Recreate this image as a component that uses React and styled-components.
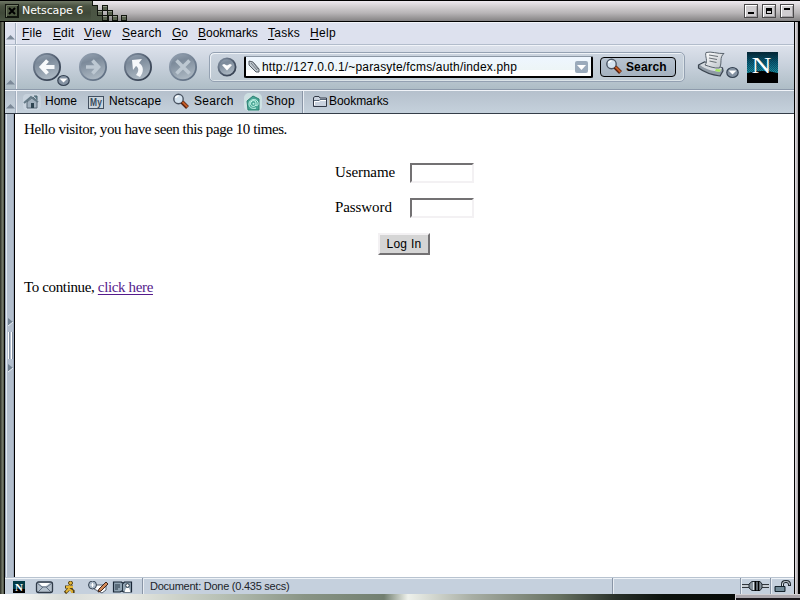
import React from "react";
import styled, { createGlobalStyle } from "styled-components";

const sans = '"Liberation Sans", Arial, sans-serif';

const Global = createGlobalStyle`
  * { box-sizing: border-box; }
  body { margin: 0; background: #000; overflow: hidden; }
  svg { display: block; flex: none; }
`;

const Window = styled.div`
  width: 800px; height: 600px; display: flex; flex-direction: column;
  font: 12px ${sans}; color: #000; background: #000; overflow: hidden;
`;
const TitleBar = styled.header`
  height: 22px; flex: none; display: flex; align-items: center; padding-right: 6px;
  border-top: 1px solid #000; border-bottom: 1px solid #000;
  background: linear-gradient(#efeaf0, #d6d2d5 25%, #b8b5b7 60%, #858384);
`;
const TitleText = styled.div`
  width: 71px; height: 20px; padding-left: 2px; color: #fff; line-height: 20px; white-space: nowrap;
  font-family: "DejaVu Sans", sans-serif; font-size: 11px; letter-spacing: -0.1px;
  background: linear-gradient(#6f7765, #4a5342 25%, #3f4838 60%, #4c5745);
`;
const CloseBox = styled.div`
  width: 20px; height: 20px; padding: 3px 0 0 5px;
  background: linear-gradient(#6f7765, #4a5342 25%, #3f4838 60%, #4c5745);
`;
const WindowButtons = styled.div`
  margin-left: auto; display: flex; gap: 4px;
`;
const Frame = styled.div`
  flex: 1; min-height: 0; display: flex;
`;
const LeftEdge = styled.div`
  width: 5px; flex: none; border-right: 1px solid #000;
  background: linear-gradient(90deg, #24281f, #74796a 60%, #4c5245);
`;
const RightEdge = styled.div`
  width: 6px; flex: none; border-left: 1px solid #000; border-right: 2px solid #000;
  background: linear-gradient(90deg, #e5e2e5, #a6a2a6);
`;
const Main = styled.div`
  flex: 1; min-width: 0; display: flex; flex-direction: column;
`;
const Bar = styled.div`
  flex: none; display: flex; align-items: stretch; height: ${p => p.$h}px;
  background: ${p => p.$bg}; border-bottom: 1px solid ${p => p.$line};
  border-top: 1px solid #f1f4f9;
`;
const Grippy = styled.div`
  width: 12px; flex: none; display: flex; flex-direction: column; justify-content: flex-end;
  align-items: center; padding: 0 0 4px; border-right: 1px solid #eef1f7; box-shadow: inset -1px 0 #a4b0c0;
`;
const BarBody = styled.div`
  flex: 1; min-width: 0; display: flex; align-items: center; padding-left: ${p => p.$pad}px;
`;
const MenuItem = styled.span`
  width: ${p => p.$w}px; white-space: nowrap; letter-spacing: ${p => p.$ls}px; line-height: 20px; padding-bottom: 2px;
  &::first-letter { text-decoration: underline; text-underline-offset: 2px; }
`;
const MenuItemText = styled.span`
  display: inline-block;
  &::first-letter { text-decoration: underline; text-underline-offset: 2px; }
`;
const NavButtons = styled.div`
  display: flex; align-items: flex-start; height: 32px; width: 192px; margin-top: 3px;
`;
const NavSlot = styled.div`
  width: ${p => p.$w}px;
`;
const Location = styled.div`
  width: 476px; height: 30px; display: flex; align-items: center; padding-left: 7px;
  border: 1px solid #94a1b2; border-radius: 5px; box-shadow: inset 1px 1px #eef2f6, inset -1px -1px #dbe3e8;
  background: linear-gradient(#cbd4df, #bdc9d2); margin-bottom: 1px;
`;
const UrlField = styled.div`
  width: 349px; height: 22px; margin-left: 7px; padding: 0 3px 0 2px; display: flex; align-items: center;
  border: solid #000; border-width: 1px 2px 2px; border-top-color: #8b97a4; border-radius: 2px;
  background: linear-gradient(#eef6ff, #edf5f6 70%, #fff 71%);
`;
const Url = styled.span`
  flex: 1; white-space: nowrap; letter-spacing: 0.17px; padding: 1px 0 0 2px; line-height: 18px;
`;
const SearchButton = styled.button`
  width: 76px; height: 20px; margin-left: 7px; padding: 0 0 1px 4px; display: flex; align-items: center; gap: 3px;
  border: 1px solid #000; border-radius: 4px; background: linear-gradient(#b7c3d0, #a5b2bf);
  font: bold 12px ${sans}; letter-spacing: 0.1px; color: #000;
`;
const PrintArea = styled.div`
  margin: 0 9px 5px 12px;
`;
const LogoArea = styled.div`
  margin: 0 0 1px -1px;
`;
const LinkItem = styled.div`
  display: flex; align-items: center; width: ${p => p.$w}px; white-space: nowrap; padding-bottom: 1px;
  letter-spacing: ${p => p.$ls ?? 0.2}px;
  span { margin-left: ${p => p.$gap}px; padding-bottom: 1px; }
`;
const BarDivider = styled.div`
  width: 2px; align-self: stretch; border-left: 1px solid #8995a6; border-right: 1px solid #e8edf3;
  margin-right: ${p => p.$after}px;
`;
const Body = styled.div`
  flex: 1; min-height: 0; display: flex;
`;
const Sidebar = styled.div`
  width: 10px; flex: none; display: flex; flex-direction: column; align-items: center;
  padding-top: 204px; border-right: 1px solid #000;
  background: linear-gradient(90deg, #9ba7b8 1px, #e1e8f0 1px 2px, #b2becd 2px 8px, #9ba7b8 8px);
`;
const Page = styled.main`
  flex: 1; background: #fff; padding: 5px 8px 0 9px; font-family: "Liberation Serif", serif; font-size: 15px;
`;
const Para = styled.p`
  margin: 0; height: 20px; line-height: 20px; white-space: nowrap; letter-spacing: ${p => p.$ls}px;
`;
const Form = styled.form`
  display: grid; grid-template-columns: 75px 65px; grid-auto-rows: 20px; row-gap: 15px;
  margin: 24px 0 0 311px; line-height: 18px;
`;
const FieldLabel = styled.label`
  letter-spacing: ${p => p.$ls}px;
`;
const Field = styled.input`
  width: 64px; height: 20px; padding: 0 2px; border: 2px solid; border-radius: 0; outline: none;
  border-color: #737173 #f3f1f3 #f3f1f3 #737173; background: #fff;
`;
const LoginButton = styled.button`
  display: block; width: 52px; height: 22px; margin: 15px 0 22px 354px; padding: 0 0 1px;
  border: 2px solid; border-color: #f3f1f3 #737173 #737173 #f3f1f3; border-radius: 0;
  background: #d5d5d5; color: #000; font: 12px ${sans}; letter-spacing: 0.3px;
`;
const PageLink = styled.a`
  color: #551a8b; text-decoration: underline; text-decoration-thickness: 1px; text-underline-offset: 2px;
`;
const StatusBar = styled.footer`
  height: 17px; flex: none; display: flex; align-items: stretch; background: #c5d0dd;
  border-top: 1px solid #b8c3d0; box-shadow: inset 0 1px #f0f4f8;
`;
const StatusIcons = styled.div`
  width: 137px; padding: 3px 0 0 7px;
`;
const StatusText = styled.div`
  width: 462px; font-size: 11px; line-height: 17px; color: #20242a; white-space: nowrap; letter-spacing: -0.25px;
`;
const StatusCell = styled.div`
  width: ${p => p.$w}px; padding-top: 2px;
`;
const LockCell = styled.div`
  padding-top: 2px;
`;
const BottomEdge = styled.div`
  height: 6px; flex: none; display: flex; justify-content: flex-end;
  background: linear-gradient(90deg, #fff, #d9dcd8 8%, #e9eae6 15%, #b6bfb3 28%, #899485 38%, #727f70 48%, #eef1eb 51%, #a8aea4 59%, #667060 70%, #29302a 77%, #0c120d 83%, #000);
`;
const Corner = styled.div`
  width: 65px; height: 6px; border: 1px solid #d3d0d4; border-width: 1px 0 0 1px;
  background: linear-gradient(#aaa6ac 0 3px, #19161b 3px);
`;

const Metal = () => (
  <defs>
    <linearGradient id="disc" x1="0" y1="0" x2=".3" y2="1">
      <stop offset="0" stopColor="#98a5b4" /><stop offset=".35" stopColor="#7c8a9a" /><stop offset="1" stopColor="#a9b5c0" />
    </linearGradient>
    <linearGradient id="rim" x1="0" y1="0" x2="1" y2="1">
      <stop stopColor="#8593a4" /><stop offset=".6" stopColor="#465264" /><stop offset="1" stopColor="#303b4b" />
    </linearGradient>
    <linearGradient id="rimDim" x1="0" y1="0" x2="1" y2="1">
      <stop stopColor="#95a2b2" /><stop offset="1" stopColor="#59697d" />
    </linearGradient>
    <linearGradient id="paper" x2="1" y2="1">
      <stop stopColor="#fff" /><stop offset="1" stopColor="#b9bfc6" />
    </linearGradient>
  </defs>
);

const Disc = ({ cx, cy, r, dim }) => (
  <circle cx={cx} cy={cy} r={r - 0.9} fill="url(#disc)" stroke={dim ? "url(#rimDim)" : "url(#rim)"} strokeWidth="1.8" />
);

const DropDisc = ({ x, y }) => (
  <g>
    <ellipse cx={x} cy={y} rx="5.7" ry="5" fill="#8593a3" stroke="#354252" strokeWidth="1.2" />
    <path d={`M${x - 4} ${y - 2}h8l-4 4z`} fill="#fff" />
  </g>
);

const navGlyphs = {
  back: "M21.5 14H10M14.5 7.5L8.5 14l6 6.5",
  forward: "M7 14h11.5M13.5 7.5l6 6.5-6 6.5",
  stop: "M7.5 7.5l13 13M20.5 7.5l-13 13",
};

const NavIcon = ({ kind }) => (
  <svg width={kind === "back" ? 40 : 28} height="34" viewBox={`0 0 ${kind === "back" ? 40 : 28} 34`}>
    <Metal />
    <Disc cx={14} cy={14} r={14} dim={kind === "forward" || kind === "stop"} />
    {kind === "reload" ? (
      <path d="M8 7l10-1-3 4c5 3 5 9 1 14l-4-2c3-4 3-7 0-9l-3 4z" fill="#f5f7fa" />
    ) : (
      <path d={navGlyphs[kind]} fill="none" stroke={kind === "back" ? "#f7f9fb" : "#bdc8d2"} strokeWidth={kind === "back" ? 3.8 : 3.6} />
    )}
    {kind === "back" && <DropDisc x={30.5} y={27.5} />}
  </svg>
);

const Magnifier = () => (
  <svg width="18" height="17" viewBox="0 0 18 17">
    <circle cx="6.5" cy="6" r="4.7" fill="#d5e3ef" stroke="#4b5563" strokeWidth="1.4" />
    <path d="M3.5 5a3 3 0 0 1 3-2" stroke="#fff" strokeWidth="1.5" fill="none" />
    <path d="M10 9l5.5 5.5" stroke="#54200f" strokeWidth="4" />
    <path d="M10.5 9l5 5" stroke="#c45b25" strokeWidth="2" />
  </svg>
);

const Triangle = () => (
  <svg width="9" height="5" viewBox="0 0 9 5"><path d="M0 4.5L4.5 0 9 4.5z" fill="#7c8998" /></svg>
);

const Staircase = () => (
  <svg width="42" height="20" viewBox="0 0 42 20" shapeRendering="crispEdges">
    <defs><linearGradient id="olive" x2="0" y2="1"><stop stopColor="#6f7765" /><stop offset=".25" stopColor="#4a5342" /><stop offset="1" stopColor="#4c5745" /></linearGradient></defs>
    <path d="M0 0H1V4H6V9H11V14H17V20H0Z" fill="url(#olive)" />
    <path d="M1 0V4H6V9H11V14H17V20" fill="none" stroke="#11150e" />
    {[[11, 4], [6, 9], [16, 9], [11, 14], [21, 14], [30, 14]].map(([x, y]) => (
      <g key={`${x}-${y}`}>
        <rect x={x} y={y} width="6" height="6" fill="#11150e" />
        <rect x={x + 1} y={y + 1} width="4" height="4" fill="#59634f" />
        <path d={`M${x + 1} ${y + 1.5}h4`} stroke="#929989" />
      </g>
    ))}
  </svg>
);

const WinButton = ({ kind }) => (
  <svg width="14" height="14" viewBox="0 0 14 14" shapeRendering="crispEdges">
    <rect width="14" height="14" fill="#4a484a" />
    <rect x="1" y="1" width="12" height="12" fill="#fff" />
    <rect x="2" y="2" width="11" height="11" fill="#a5a2a5" />
    <rect x="2" y="2" width="10" height="10" fill="#d0cdd0" />
    {kind === "min" && <path d="M4 8h6v2H4z" />}
    {kind === "max" && <path d="M4 4h6v6H4zM5 7v2h4V7z" fillRule="evenodd" />}
    {kind === "shade" && <path d="M4 4h6v2H4z" />}
  </svg>
);

const Printer = () => (
  <svg width="42" height="30" viewBox="0 0 42 30">
    <Metal />
    <path d="M1.5 15l6-3 18 6 .5 3-3 5c-8-1-16-4-21.500-8z" fill="#8f9aa5" stroke="#3a444f" strokeWidth="1.2" />
    <path d="M3 15l5-2.500 17 5.500-2 4C15 21 8 19 3 15z" fill="#d6dbe0" />
    <path d="M8 15C11.500 11 7.500 6 9 2.500c5-1.500 12 1.500 18 1-5 4-1.500 9-4.500 14.500-5 .5-10-1.500-14.500-3z" fill="url(#paper)" stroke="#5a646e" />
    <path d="M12 5l9 1.500M12 8l8 1.500M12.500 11l7 1.500" stroke="#6b7278" strokeWidth="1.1" />
    <path d="M19 19l5 .5-1.500 2.500-4.500-1z" fill="#a3e860" />
    <DropDisc x={35.5} y={22.5} />
  </svg>
);

const Logo = () => (
  <svg width="31" height="31" viewBox="0 0 31 31">
    <defs><linearGradient id="sky" x2="0" y2="1"><stop stopColor="#052430" /><stop offset=".35" stopColor="#086079" /><stop offset=".65" stopColor="#1b91a3" /></linearGradient>
      <pattern id="dither" width="2" height="2" patternUnits="userSpaceOnUse"><path d="M0 0h1v1H0zM1 1h1v1H1z" fill="#022c43" /></pattern></defs>
    <rect width="31" height="31" fill="url(#sky)" />
    <rect width="31" height="20" fill="url(#dither)" opacity=".5" />
    <path d="M0 21Q15 17 31 21V31H0Z" />
    <text x="4.5" y="20.5" fill="#fff" fontFamily="Liberation Serif, serif" fontSize="23" textLength="20" lengthAdjust="spacingAndGlyphs">N</text>
  </svg>
);

const Home = () => (
  <svg width="18" height="16" viewBox="0 0 18 16">
    <rect width="18" height="16" rx="4" fill="#d6e0e9" opacity=".5" />
    <path d="M4 8v6h10V7L10 3z" fill="#a3b2bf" stroke="#5a6b78" />
    <path d="M1 9l7-6 7 5" fill="none" stroke="#647986" strokeWidth="2" />
    <path d="M11 2h3v4" fill="#678895" stroke="#48616d" /><path d="M8 9h3v5H8z" fill="#2f4552" />
  </svg>
);

const MyBadge = () => (
  <svg width="16" height="14" viewBox="0 0 16 14">
    <rect x=".5" y="1.500" width="15" height="12" fill="#cbd5de" stroke="#435161" />
    <text x="2" y="11" fontFamily="Liberation Sans, sans-serif" fontWeight="bold" fontSize="10" textLength="12" lengthAdjust="spacingAndGlyphs" fill="#364b5d">My</text>
  </svg>
);

const ShopBag = () => (
  <svg width="18" height="18" viewBox="0 0 18 18">
    <rect width="18" height="18" rx="5" fill="#d9eeeb" opacity=".65" />
    <path d="M3 8l6-5 6 3v11H4z" fill="#48a594" stroke="#2b8072" />
    <path d="M12 12c-2 2.500-5.500 1.500-5.500-1.500 0-3.500 5.500-4 5.500-.5v2c1 1.500 2.500 0 2-2.500-1-4.500-9-3.500-9 1.500 0 4 4 5 7 4" fill="none" stroke="#d2fff2" strokeWidth="1" />
    <circle cx="9.500" cy="10.700" r="1" fill="#c0f3e5" />
  </svg>
);

const Folder = () => (
  <svg width="15" height="13" viewBox="0 0 15 13">
    <path d="M.5 11.500V2.500L2 1.500h4l1 1.500h6.500v8.500z" fill="#c9d2de" stroke="#323946" />
    <path d="M1.500 10V6.500h5l1-1H13" fill="none" stroke="#fff" /><path d="M1 5.500h5l1-1h6" fill="none" stroke="#596777" />
  </svg>
);

const Pen = () => (
  <svg width="12" height="13" viewBox="0 0 12 13">
    <path d="M1 1l4 1 6 7v3H8L1 5z" fill="#bec7ce" stroke="#535b63" />
    <path d="M3 3l6 7M5 2l5 7" stroke="#727b83" fill="none" />
  </svg>
);

const StatusGlyphs = () => (
  <svg width="122" height="13" viewBox="0 0 122 13">
    <path d="M1 0h12v12H1z" fill="#023b46" /><path d="M1 8h12v4H1z" fill="#000" />
    <text x="3" y="10" fontFamily="Liberation Serif, serif" fontWeight="bold" fontSize="11" fill="#fff">N</text>
    <rect x="24.500" y="1" width="16" height="10.500" rx="2" fill="#b4c0cc" stroke="#303b49" strokeWidth="1.300" />
    <path d="M25 2l5 4h5l5-4M26 11l5-5M39 11l-5-5" fill="none" stroke="#627082" /><path d="M27 2h11l-4 3h-4z" fill="#fff" />
    <g fill="none" stroke="#554112" strokeWidth="3.200"><path d="M58 5l-2 4-3 3M57 7l4 3v2M53 6h8" /></g>
    <g fill="none" stroke="#e6b838" strokeWidth="1.800"><path d="M58 4l-2 5-2 2M57 8l3 2v2M54 6h7" /></g>
    <circle cx="58.500" cy="2" r="2" fill="#e6b838" stroke="#554112" />
    <path d="M81 4h13v5l-4 3-8-4z" fill="#fff" stroke="#596473" />
    <circle cx="80.500" cy="4" r="4" fill="#a9b8c7" stroke="#394757" /><path d="M78.500 4h4M80.500 2v4" stroke="#fff" />
    <path d="M87 8l7-7 2 2-7 7-3 1z" fill="#d38b59" stroke="#40251b" />
    <path d="M101.500 1h8l1.500 1.500L112.500 1h7v10h-8l-1.500-1-2 1h-6.500z" fill="#91a4b3" stroke="#192737" strokeWidth="1.200" />
    <path d="M103 4h5M103 6h5M103 8h3M110.500 3v7" stroke="#263645" /><circle cx="115.500" cy="4.500" r="1.800" fill="#fff" stroke="#263645" /><path d="M112.500 11l1.500-4h3l1.500 4z" fill="#fff" />
  </svg>
);

const Plug = () => (
  <svg width="27" height="12" viewBox="0 0 27 12">
    <path d="M0 4h8l2-3h8l2 3h7v4h-7l-2 3h-8L8 8H0z" fill="#8c98a4" />
    <path d="M0 4.500h8M0 7.500h8M20 4.500h7M20 7.500h7" stroke="#30363c" /><path d="M0 6h8M20 6h7" stroke="#fff" />
    <path d="M7 4l3-2.500h8L20 4v4l-2 2.500h-8L7 8z" fill="#87929c" stroke="#202830" /><path d="M11.500 2v8" stroke="#dce3e8" /><path d="M13.500 1v10M16.500 1v10" stroke="#000" strokeWidth="1.600" />
  </svg>
);

const Lock = () => (
  <svg width="18" height="13" viewBox="0 0 18 13">
    <path d="M8.500 6V4q0-2.500 3-2.500h1q3 0 3 3V6" fill="none" stroke="#202930" strokeWidth="3" />
    <path d="M8.500 6V4q0-2.500 3-2.500h1q3 0 3 3V5" fill="none" stroke="#dae2e9" />
    <path d="M1 6.500h10v5H1z" fill="#577080" stroke="#15232c" /><path d="M2 8h8M2 10h8" stroke="#8fa5b1" />
  </svg>
);

const menu = [["File", 31, 0.2], ["Edit", 31, 0.1], ["View", 38, 0.4], ["Search", 50, 0.3], ["Go", 26, 0.0], ["Bookmarks", 70, -0.02], ["Tasks", 42, 0.25], ["Help", 40, 0.3]];

export default function App() {
  return (
    <Window>
      <Global />
      <TitleBar>
        <CloseBox>
          <svg width="14" height="14" viewBox="0 0 14 14"><rect width="14" height="14" fill="#11150e" /><path d="M1.500 13V1.500H13" stroke="#727b66" fill="none" /><rect x="2" y="2" width="10" height="10" fill="#4b5640" /><path d="M4 4l6 6M10 4l-6 6" stroke="#000" strokeWidth="2" /></svg>
        </CloseBox>
        <TitleText>Netscape 6</TitleText>
        <Staircase />
        <WindowButtons><WinButton kind="min" /><WinButton kind="max" /><WinButton kind="shade" /></WindowButtons>
      </TitleBar>
      <Frame>
        <LeftEdge />
        <Main>
          <Bar $h={23} $bg="#dde1ee" $line="#b2bccb">
            <Grippy><Triangle /></Grippy>
            <BarBody $pad={5}>{menu.map(([t, w, ls]) => <MenuItem key={t} $w={w} $ls={ls}><MenuItemText>{t}</MenuItemText></MenuItem>)}</BarBody>
          </Bar>
          <Bar $h={45} $bg="linear-gradient(#dce1eb, #c8d1dc 45%, #aebdc6)" $line="#8d9aab">
            <Grippy><Triangle /></Grippy>
            <BarBody $pad={0}>
              <NavButtons>
                <NavSlot $w={16} /><NavSlot $w={46}><NavIcon kind="back" /></NavSlot>
                <NavSlot $w={45}><NavIcon kind="forward" /></NavSlot>
                <NavSlot $w={45}><NavIcon kind="reload" /></NavSlot>
                <NavSlot $w={40}><NavIcon kind="stop" /></NavSlot>
              </NavButtons>
              <Location>
                <svg width="20" height="20" viewBox="0 0 20 20"><Metal /><Disc cx={10} cy={10} r={9.5} /><path d="M5 8l2-1 3 1.500L13 7l2 1-5 5.500z" fill="#fff" /></svg>
                <UrlField><Pen /><Url>http://127.0.0.1/~parasyte/fcms/auth/index.php</Url>
                  <svg width="13" height="12" viewBox="0 0 13 12"><rect width="13" height="12" rx="2" fill="#9aaabb" /><path d="M2 4h9L6.500 9z" fill="#fff" /></svg>
                </UrlField>
                <SearchButton><Magnifier />Search</SearchButton>
              </Location>
              <PrintArea><Printer /></PrintArea>
              <LogoArea><Logo /></LogoArea>
            </BarBody>
          </Bar>
          <Bar $h={24} $bg="linear-gradient(#b5c0cc, #c5d1dc)" $line="#343d49">
            <Grippy><Triangle /></Grippy>
            <BarBody $pad={6}>
              <LinkItem $w={65} $gap={4} $ls={0}><Home /><span>Home</span></LinkItem>
              <LinkItem $w={84} $gap={5}><MyBadge /><span>Netscape</span></LinkItem>
              <LinkItem $w={72} $gap={4} $ls={0.3}><Magnifier /><span>Search</span></LinkItem>
              <LinkItem $w={58} $gap={4}><ShopBag /><span>Shop</span></LinkItem>
              <BarDivider $after={9} />
              <LinkItem $w={90} $gap={1} $ls={-0.05}><Folder /><span>Bookmarks</span></LinkItem>
            </BarBody>
          </Bar>
          <Body>
            <Sidebar>
              <svg width="8" height="55" viewBox="0 0 8 55"><path d="M2 0v8l5-4zM2 46v8l5-4z" fill="#718292" /><path d="M2 8l5-4M2 54l5-4" stroke="#e8edf2" /><path d="M2.500 14v27M5.500 14v27" stroke="#fff" /><path d="M3.500 14v27M6.500 14v27" stroke="#8290a1" /></svg>
            </Sidebar>
            <Page>
              <Para $ls={-0.43}>Hello visitor, you have seen this page 10 times.</Para>
              <Form>
                <FieldLabel htmlFor="user" $ls={-0.1}>Username</FieldLabel><Field id="user" />
                <FieldLabel htmlFor="pass" $ls={-0.08}>Password</FieldLabel><Field id="pass" type="password" />
              </Form>
              <LoginButton>Log In</LoginButton>
              <Para $ls={-0.36}>To continue, <PageLink>click here</PageLink></Para>
            </Page>
          </Body>
          <StatusBar>
            <StatusIcons><StatusGlyphs /></StatusIcons>
            <BarDivider $after={6} />
            <StatusText>Document: Done (0.435 secs)</StatusText>
            <BarDivider $after={0} /><StatusCell $w={126} />
            <BarDivider $after={0} /><StatusCell $w={28}><Plug /></StatusCell>
            <BarDivider $after={2} /><LockCell><Lock /></LockCell>
          </StatusBar>
        </Main>
        <RightEdge />
      </Frame>
      <BottomEdge><Corner /></BottomEdge>
    </Window>
  );
}
